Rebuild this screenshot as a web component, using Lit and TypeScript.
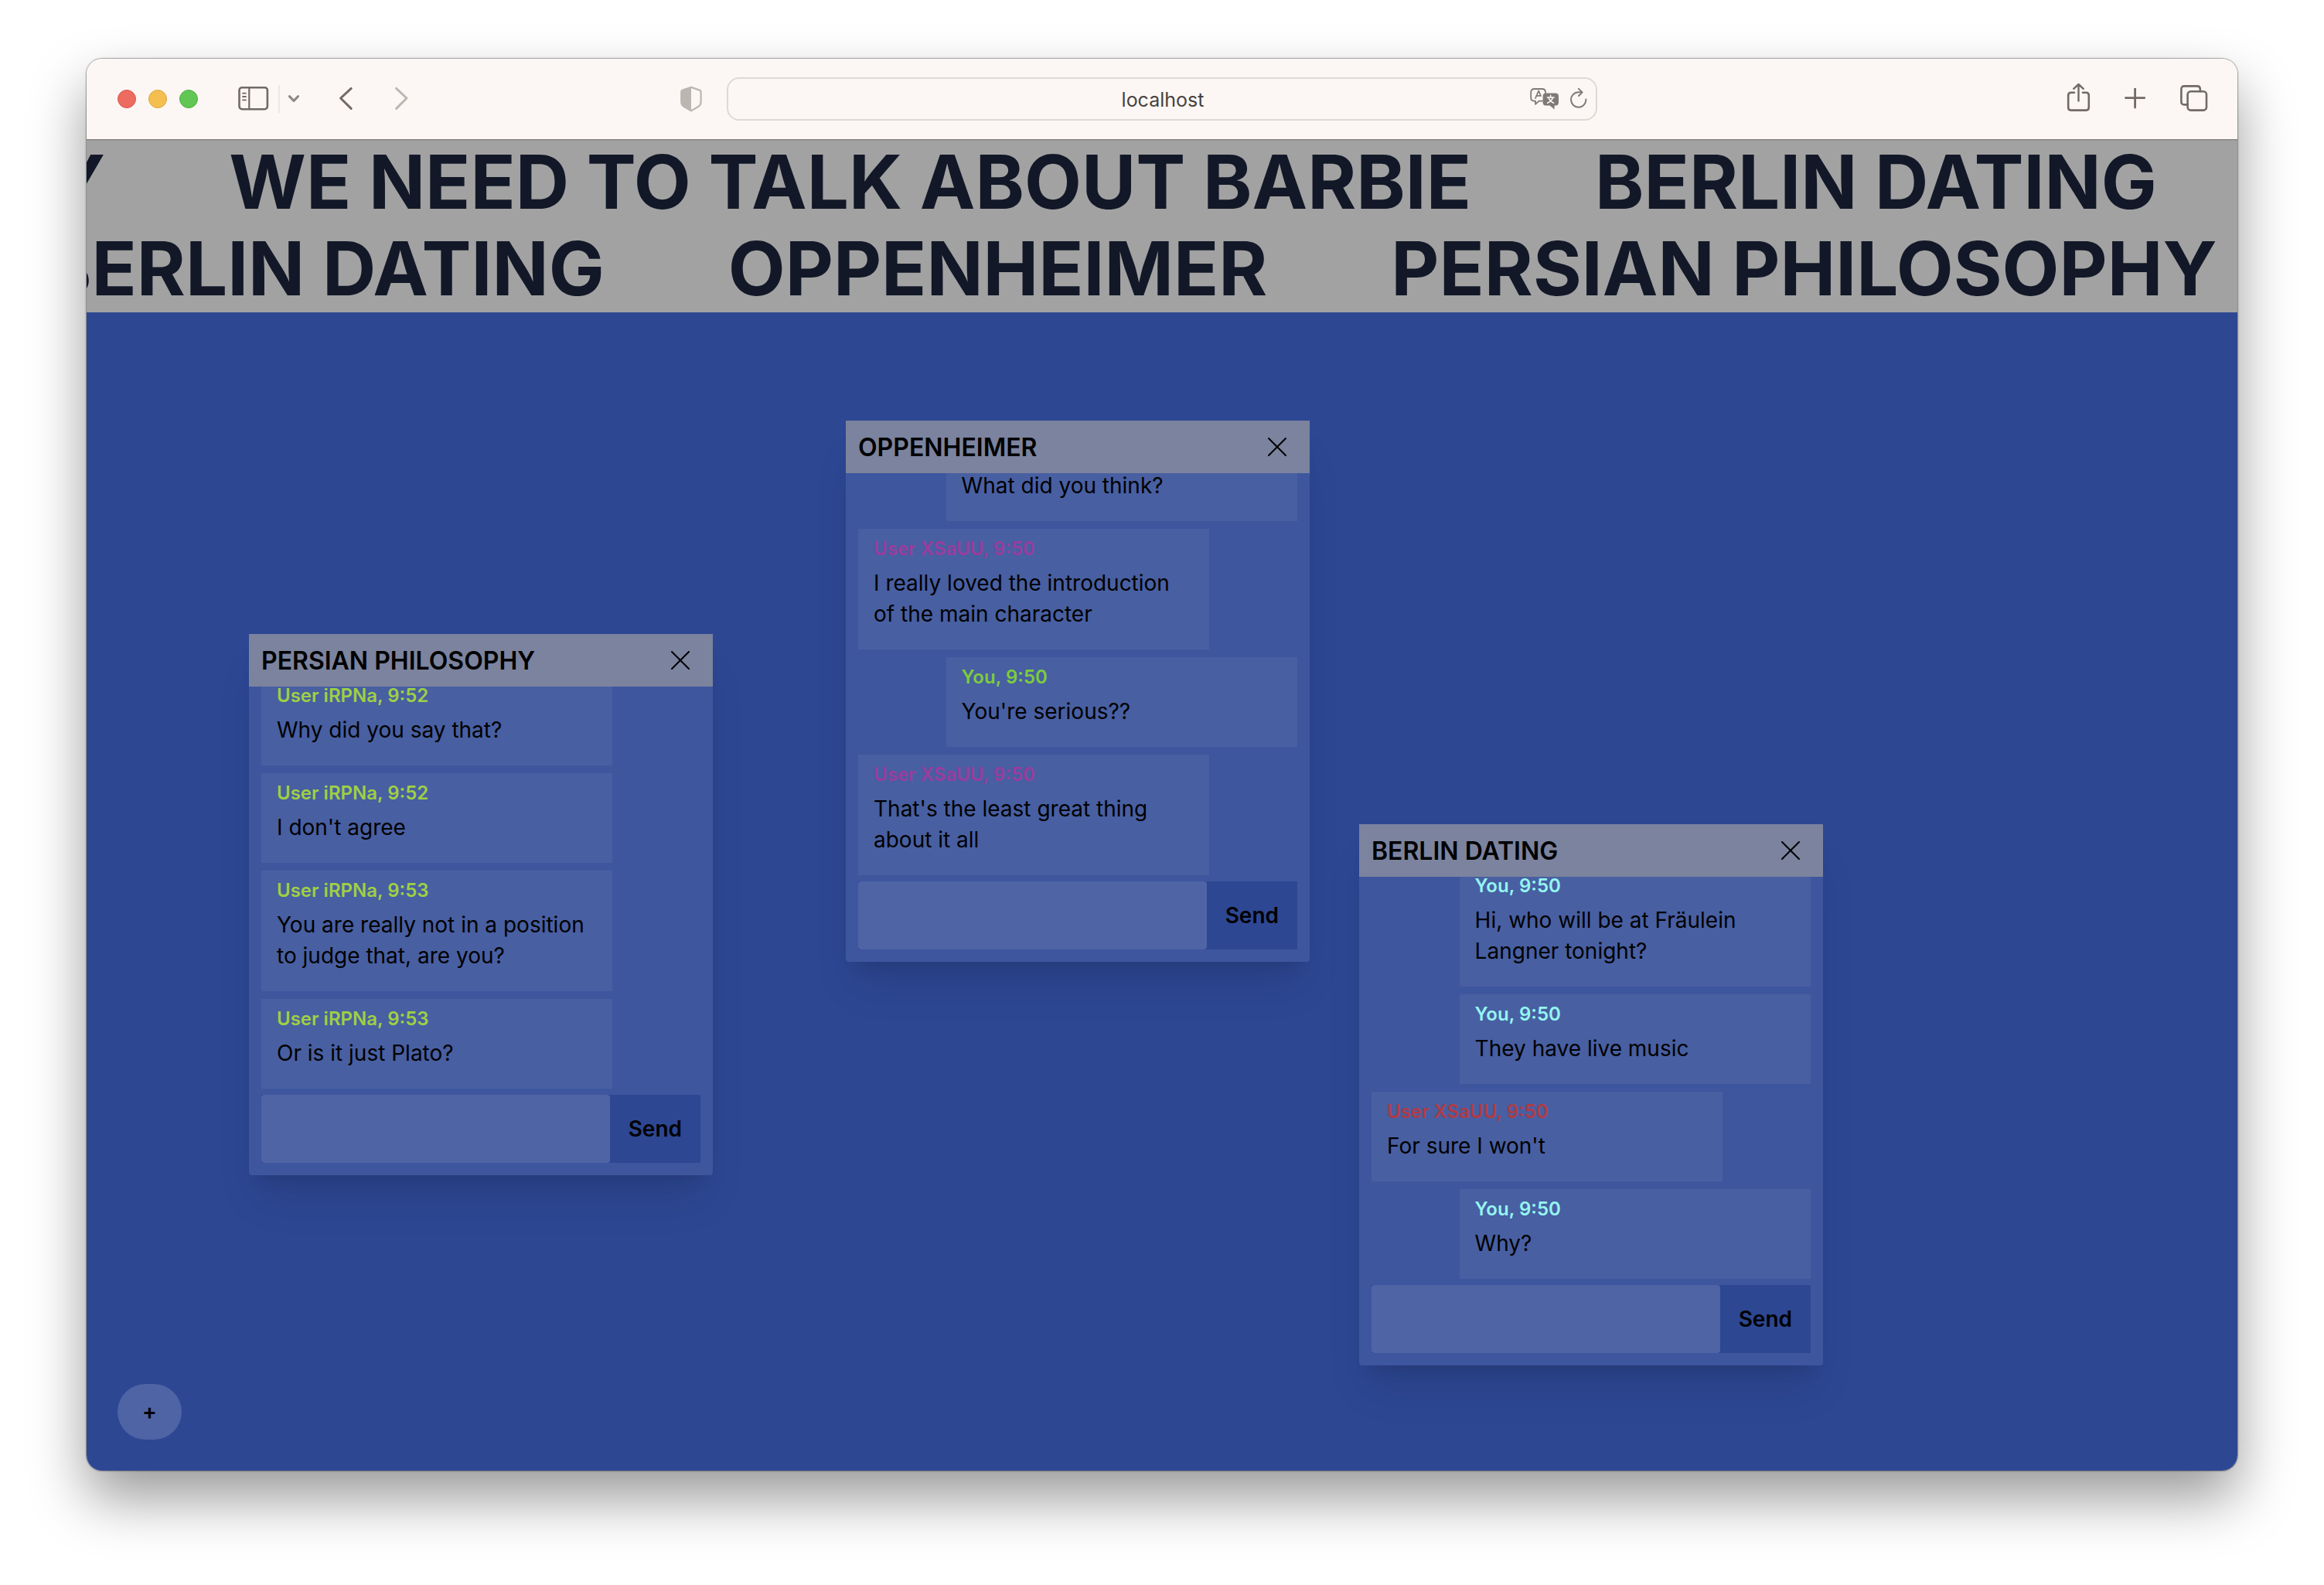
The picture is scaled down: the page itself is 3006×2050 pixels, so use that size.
import { LitElement, css, html, svg, nothing } from "lit";
import { customElement, property } from "lit/decorators.js";
import { styleMap } from "lit/directives/style-map.js";

interface Message {
  author?: string;
  time: string;
  text: string;
  own?: boolean;
}

interface Room {
  id: string;
  title: string;
  left: number;
  top: number;
  ownColor: string;
  otherColor: string;
  messages: Message[];
}

const ROOMS: Room[] = [
  {
    id: "persian",
    title: "PERSIAN PHILOSOPHY",
    left: 210,
    top: 416,
    ownColor: "#95f5f1",
    otherColor: "#9fd043",
    messages: [
      { author: "User iRPNa", time: "9:52", text: "Why did you say that?" },
      { author: "User iRPNa", time: "9:52", text: "I don't agree" },
      { author: "User iRPNa", time: "9:53", text: "You are really not in a position to judge that, are you?" },
      { author: "User iRPNa", time: "9:53", text: "Or is it just Plato?" },
    ],
  },
  {
    id: "oppenheimer",
    title: "OPPENHEIMER",
    left: 982,
    top: 140,
    ownColor: "#7ccd3b",
    otherColor: "#9a3c9d",
    messages: [
      { time: "9:50", text: "What did you think?", own: true },
      { author: "User XSaUU", time: "9:50", text: "I really loved the introduction of the main character" },
      { author: "You", time: "9:50", text: "You're serious??", own: true },
      { author: "User XSaUU", time: "9:50", text: "That's the least great thing about it all" },
    ],
  },
  {
    id: "berlin",
    title: "BERLIN DATING",
    left: 1646,
    top: 662,
    ownColor: "#95f5f1",
    otherColor: "#b13a44",
    messages: [
      { author: "You", time: "9:50", text: "Hi, who will be at Fräulein Langner tonight?", own: true },
      { author: "You", time: "9:50", text: "They have live music", own: true },
      { author: "User XSaUU", time: "9:50", text: "For sure I won't" },
      { author: "You", time: "9:50", text: "Why?", own: true },
    ],
  },
];

const TICKER = [
  { shift: -1044, items: ["PERSIAN PHILOSOPHY", "WE NEED TO TALK ABOUT BARBIE", "BERLIN DATING"] },
  { shift: -57, items: ["BERLIN DATING", "OPPENHEIMER", "PERSIAN PHILOSOPHY"] },
];

@customElement("chat-window")
export class ChatWindow extends LitElement {
  @property({ attribute: false }) room!: Room;

  static styles = css`
    :host {
      display: flex;
      flex-direction: column;
      box-sizing: border-box;
      background: #3e569e;
      border-radius: 4px;
      box-shadow: 0 40px 50px -10px rgba(0, 0, 0, 0.1), 0 16px 20px -12px rgba(0, 0, 0, 0.1);
      color: #000;
      font-size: 28px;
      line-height: 40px;
    }
    .head {
      display: flex;
      align-items: center;
      justify-content: space-between;
      flex: none;
      height: 68px;
      padding: 0 16px;
      background: #7b839e;
    }
    .title {
      margin: 0;
      font-size: 32px;
      font-weight: 600;
      line-height: 40px;
      padding-top: 2px;
    }
    .close {
      display: flex;
      padding: 14px;
      border: 0;
      background: none;
    }
    .log {
      flex: 1;
      min-height: 0;
      display: flex;
      flex-direction: column;
      justify-content: flex-end;
      gap: 10px;
      padding: 0 16px;
      overflow: hidden;
    }
    .message {
      box-sizing: border-box;
      flex: none;
      width: 80%;
      padding: 11px 20px 26px;
      background: #485fa2;
    }
    .own {
      align-self: flex-end;
    }
    .author {
      margin: 0 0 9px;
      font-size: 24px;
      font-weight: 600;
      line-height: 30px;
    }
    .text {
      margin: 0;
    }
    .form {
      display: flex;
      flex: none;
      height: 88px;
      margin: 8px 16px 16px;
      background: #2d4793;
    }
    .entry {
      flex: 1;
      min-width: 0;
      box-sizing: border-box;
      padding: 0 20px;
      border: 0;
      border-radius: 4px;
      background: #4f64a5;
      font: inherit;
    }
    .send {
      padding: 0 24px;
      border: 0;
      background: none;
      color: #000;
      font: inherit;
      font-weight: 600;
    }
  `;

  render() {
    const { id, title, messages, ownColor, otherColor } = this.room;
    return html`
      <header class="head">
        <h2 class="title">${title}</h2>
        <button class="close" type="button" aria-label="Close ${title}">
          <svg width="24" height="24" viewBox="0 0 24 24" fill="none" stroke="currentColor" stroke-width="2" stroke-linecap="round">
            <path d="M1 1 23 23M23 1 1 23" />
          </svg>
        </button>
      </header>
      <div class="log" role="log">
        ${messages.map(
          (m) => html`
            <article class="message ${m.own ? "own" : ""}">
              ${m.author
                ? html`<p class="author" style=${styleMap({ color: m.own ? ownColor : otherColor })}>${m.author}, ${m.time}</p>`
                : nothing}
              <p class="text">${m.text}</p>
            </article>
          `
        )}
      </div>
      <form class="form" @submit=${(e: Event) => e.preventDefault()}>
        <input class="entry" id="entry-${id}" type="text" aria-label="Message to ${title}" autocomplete="off" />
        <button class="send" type="submit">Send</button>
      </form>
    `;
  }
}

const icon = (w: number, h: number, body: unknown) => html`
  <svg width=${w} height=${h} viewBox="0 0 ${w} ${h}" fill="none" stroke="currentColor" stroke-width="2.6" stroke-linecap="round" stroke-linejoin="round" aria-hidden="true">
    ${body}
  </svg>
`;

const ICONS = {
  sidebar: icon(40, 32, svg`
    <rect x="1.5" y="1.2" width="36.4" height="28" rx="3.6" />
    <path d="M14.3 1.2v28" stroke-width="2.2" />
    <path d="M6 8.6h4M6 13h4M6 17.4h4" stroke-width="1.8" />
  `),
  chevron: icon(16, 12, svg`<path d="M2.4 2.6 8 8.4 13.6 2.6" stroke-width="3" />`),
  back: icon(20, 32, svg`<path d="M16.2 2.4 2.6 15 16.2 28.4" stroke-width="3" />`),
  forward: icon(20, 32, svg`<path d="M2.6 2.4 16 15 2.6 28.4" stroke-width="3" />`),
  shield: icon(28, 34, svg`
    <path d="M14 1.9 25 5.6Q26.6 6.1 26.6 7.8V20.5Q26.6 24.6 23.4 26.7L14 32.4 4.4 26.7Q1.2 24.6 1.2 20.5V7.8Q1.2 6.1 2.8 5.6Z" stroke-width="2.2" />
    <path d="M14 1.5 2.6 5.5Q1 6 1 7.8V20.5Q1 24.6 4.4 26.7L14 32.6Z" fill="currentColor" stroke="none" />
  `),
  translate: icon(40, 30, svg`
    <path d="M17 17.6H12.6L8 21.8V17.6H6.6Q2.2 17.6 2.2 13.2V6.4Q2.2 2 6.6 2H16.6Q21 2 21 6.4V7.4" stroke-width="1.8" />
    <path d="M8 14 12.2 4.4 15 11M9.6 10.8H14.6" stroke-width="1.7" />
    <path d="M21.6 7.4H34Q38 7.4 38 11.4V19.6Q38 23.6 34 23.6H32.6V28.6L26.6 23.6H21.6Q17.6 23.6 17.6 19.6V11.4Q17.6 7.4 21.6 7.4Z" fill="currentColor" stroke="none" />
    <path d="M27.6 10.4V12.2M23.4 13H32M25 13.4Q26.6 17.8 31.6 20.2M30.4 13.4Q28.8 17.8 23.6 20.2" stroke="#fcf7f4" stroke-width="1.6" />
  `),
  reload: icon(24, 28, svg`
    <path d="M21.4 14.6A9.7 9.7 0 1 1 11.8 5.3H16" stroke-width="2" />
    <path d="M11.9 .9 16.6 5.4 12 10" stroke-width="2" />
  `),
  share: icon(32, 40, svg`
    <path d="M11 11.8H6.8Q3.2 11.8 3.2 15.4V31Q3.2 34.6 6.8 34.6H26.2Q29.8 34.6 29.8 31V15.4Q29.8 11.8 26.2 11.8H22" />
    <path d="M16.5 22.6V1.6M10.2 6.8 16.5 1 22.8 6.8" stroke-width="2.4" />
  `),
  plus: icon(28, 28, svg`<path d="M13.6 .6V25M1.4 12.6H25.8" stroke-width="2.8" />`),
  tabs: icon(36, 36, svg`
    <rect x="9.6" y="8.2" width="24.4" height="24.4" rx="4" />
    <path d="M9.6 25.4H5.4Q1.4 25.4 1.4 21.4V5.4Q1.4 1.4 5.4 1.4H21.8Q25.8 1.4 25.8 5.4V8.2" />
  `),
};

@customElement("app-root")
export class AppRoot extends LitElement {
  static styles = css`
    :host {
      display: flex;
      box-sizing: border-box;
      min-height: 100vh;
      padding: 76px 112px 148px;
      background: #fff;
      font-family: Inter, "Liberation Sans", sans-serif;
    }
    .browser {
      flex: 1;
      min-width: 0;
      display: flex;
      flex-direction: column;
      overflow: hidden;
      border-radius: 20px;
      box-shadow: 0 0 0 1px rgba(0, 0, 0, 0.22), 0 0 3px rgba(0, 0, 0, 0.3), 0 36px 72px rgba(0, 0, 0, 0.4);
    }
    .toolbar {
      display: grid;
      grid-template-columns: minmax(0, 1fr) 40.5% minmax(0, 1fr);
      align-items: center;
      flex: none;
      height: 104px;
      background: #fcf7f4;
      color: #716a66;
    }
    .side {
      display: flex;
      align-items: center;
    }
    .start {
      padding: 0 32px 0 40px;
    }
    .end {
      justify-content: flex-end;
      gap: 44px;
      padding-right: 38px;
    }
    .lights {
      display: flex;
      gap: 16px;
      margin-right: 52px;
    }
    .light {
      box-sizing: border-box;
      width: 24px;
      height: 24px;
      padding: 0;
      border: 1px solid #d9584b;
      border-radius: 50%;
      background: #ed6b60;
    }
    .minimise {
      border-color: #dba73f;
      background: #f5bf4f;
    }
    .zoom {
      border-color: #52ae42;
      background: #62c655;
    }
    .tool {
      display: flex;
      padding: 0;
      border: 0;
      background: none;
      color: inherit;
    }
    .rule {
      width: 2px;
      height: 36px;
      margin: 0 10px 0 12px;
      background: #ede7e5;
    }
    .faint {
      color: #8d8785;
    }
    .back {
      margin: 0 52px 0 50px;
    }
    .off {
      color: #bcb6b3;
    }
    .privacy {
      margin-left: auto;
    }
    .address {
      display: grid;
      grid-template-columns: 1fr auto 1fr;
      align-items: center;
      box-sizing: border-box;
      height: 56px;
      padding: 0 10px;
      border: 2px solid #dfd9d6;
      border-radius: 16px;
      color: #7f7a77;
    }
    .location {
      grid-column: 2;
      padding: 2px 0 0 2px;
      color: #48423f;
      font-size: 25px;
      line-height: 32px;
      text-decoration: none;
    }
    .actions {
      display: flex;
      align-items: center;
      justify-content: flex-end;
      gap: 12px;
    }
    .ticker {
      flex: none;
      box-sizing: border-box;
      height: 224px;
      overflow: hidden;
      background: #a2a2a2;
      box-shadow: inset 0 1px #7d7b7a, inset 0 2px #989898;
      color: #121827;
    }
    .track {
      display: flex;
      gap: 160px;
      width: max-content;
      height: 112px;
      font-size: 96px;
      font-weight: 700;
      line-height: 110px;
      white-space: nowrap;
    }
    .canvas {
      position: relative;
      flex: 1;
      min-height: 1498px;
      background: #2d4793;
    }
    .room {
      position: absolute;
      width: 600px;
      height: 700px;
    }
    .add {
      position: absolute;
      left: 40px;
      bottom: 40px;
      height: 72px;
      padding: 0 32px;
      border: 0;
      border-radius: 36px;
      background: #4f64a5;
      color: #000;
      font: inherit;
      font-size: 28px;
      font-weight: 600;
    }
  `;

  private tool(label: string, image: unknown, extra = "") {
    return html`<button class="tool ${extra}" type="button" aria-label=${label}>${image ?? nothing}</button>`;
  }

  render() {
    return html`
      <div class="browser">
        <header class="toolbar">
          <div class="side start">
            <div class="lights">
              <button class="light" type="button" aria-label="Close window"></button>
              <button class="light minimise" type="button" aria-label="Minimise window"></button>
              <button class="light zoom" type="button" aria-label="Zoom window"></button>
            </div>
            ${this.tool("Sidebar", ICONS.sidebar)}
            <span class="rule"></span>
            ${this.tool("Tab groups", ICONS.chevron, "faint")}
            ${this.tool("Back", ICONS.back, "back")}
            ${this.tool("Forward", ICONS.forward, "off")}
            ${this.tool("Privacy report", ICONS.shield, "off privacy")}
          </div>
          <div class="address">
            <a class="location" href="#">localhost</a>
            <div class="actions">
              ${this.tool("Translate", ICONS.translate)} ${this.tool("Reload", ICONS.reload)}
            </div>
          </div>
          <div class="side end">
            ${this.tool("Share", ICONS.share)} ${this.tool("New tab", ICONS.plus)}
            ${this.tool("Tab overview", ICONS.tabs)}
          </div>
        </header>
        <section class="ticker" aria-label="Topics">
          ${TICKER.map(
            (row) => html`
              <div class="track" style=${styleMap({ transform: `translateX(${row.shift}px)` })}>
                ${row.items.map((item) => html`<span>${item}</span>`)}
              </div>
            `
          )}
        </section>
        <main class="canvas">
          ${ROOMS.map(
            (room) => html`
              <chat-window
                class="room"
                style=${styleMap({ left: `${room.left}px`, top: `${room.top}px` })}
                .room=${room}
              ></chat-window>
            `
          )}
          <button class="add" type="button" aria-label="New room">+</button>
        </main>
      </div>
    `;
  }
}
